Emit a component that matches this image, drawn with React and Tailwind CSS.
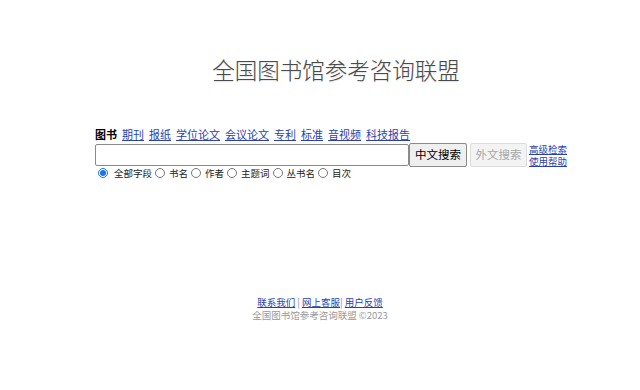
export default function App() {
  const tabs = ["期刊", "报纸", "学位论文", "会议论文", "专利", "标准", "音视频", "科技报告"];
  const fields = ["书名", "作者", "主题词", "丛书名", "目次"];
  const font = { fontFamily: '"Noto Sans CJK SC", "Noto Sans", sans-serif' };
  return (
    <div className="w-[640px] h-[390px] bg-white relative" style={font}>
      <div className="pt-[55px] flex justify-center pl-[32px]">
        <div className="text-[22.5px] leading-[28px] text-[#4a4a4a] font-light [text-shadow:0_1px_1px_rgba(0,0,0,0.12)]">
          全国图书馆参考咨询联盟
        </div>
      </div>
      <div className="ml-[95px] mt-[44px] w-[480px]">
        <div className="flex items-end gap-[5px] text-[11px] leading-[14px] h-[14px]">
          <span className="font-bold text-black">图书</span>
          {tabs.map((t) => (
            <a key={t} href="#" className="text-[#2a3fb0] underline">{t}</a>
          ))}
        </div>
        <div className="flex items-center mt-[1px]">
          <input className="w-[314px] h-[22px] border border-[#8a8a8a] rounded-[2px] bg-white outline-none" />
          <button className="w-[58px] h-[24px] border border-[#8a8a8a] rounded-[2px] bg-[#efefef] text-[11.5px] text-black leading-none">中文搜索</button>
          <button disabled className="ml-[3px] w-[57px] h-[24px] border border-[#dcdcdc] rounded-[2px] bg-[#f3f3f3] text-[11.5px] text-[#a8a8a8] leading-none">外文搜索</button>
          <div className="ml-[2px] flex flex-col gap-[1px] text-[9.5px] leading-[11px] pt-[2px]">
            <a href="#" className="text-[#2a3fb0] underline">高级检索</a>
            <a href="#" className="text-[#2a3fb0] underline">使用帮助</a>
          </div>
        </div>
        <div className="flex items-center text-[9.5px] leading-[12px] text-[#222]">
          <label className="flex items-center">
            <input type="radio" name="f" defaultChecked className="w-[10px] h-[10px] m-0 ml-[3px] mr-[6px] accent-[#1a73e8]" />
            <span>全部字段</span>
          </label>
          {fields.map((f) => (
            <label key={f} className="flex items-center">
              <input type="radio" name="f" className="w-[10px] h-[10px] m-0 ml-[3px] mr-[4px]" />
              <span>{f}</span>
            </label>
          ))}
        </div>
      </div>
      <div className="mt-[117px] flex flex-col items-center text-[9.5px] leading-[13px]">
        <div className="text-[#888]">
          <a href="#" className="text-[#2a3fb0] underline">联系我们</a>
          <span> | </span>
          <a href="#" className="text-[#2a3fb0] underline">网上客服</a>
          <span>| </span>
          <a href="#" className="text-[#2a3fb0] underline">用户反馈</a>
        </div>
        <div className="text-[#999]">全国图书馆参考咨询联盟 ©2023</div>
      </div>
    </div>
  );
}
